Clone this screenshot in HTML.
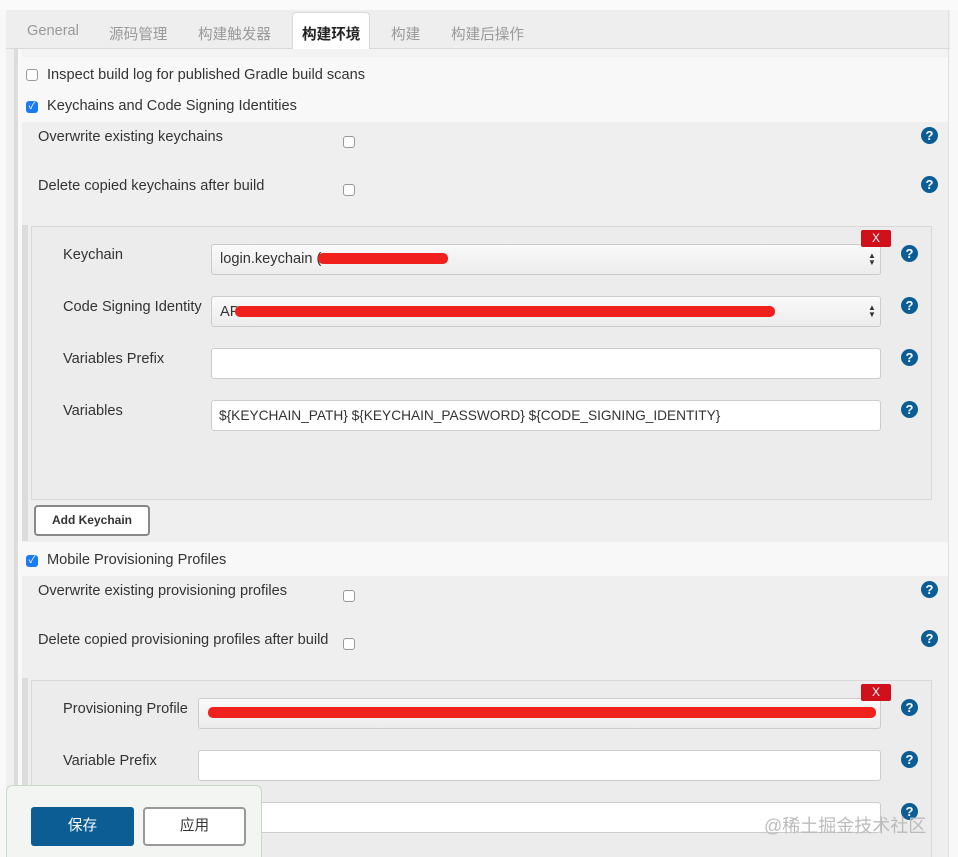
<!DOCTYPE html>
<html><head><meta charset="utf-8"><style>
*{margin:0;padding:0;box-sizing:border-box}
html,body{width:958px;height:857px;overflow:hidden}
body{background:#f8f8f8;font-family:"Liberation Sans","Noto Sans CJK SC",sans-serif;font-size:14.6px;color:#333;position:relative}
.a{position:absolute}
.t{position:absolute;white-space:nowrap}
.cb{position:absolute;width:12px;height:12px;border:1px solid #999;border-radius:3px;background:#fff}
.cbc{position:absolute;width:12px;height:12px;border-radius:3px;background:#1a7cf2;color:#fff;font-size:10px;line-height:12px;text-align:center}
.h{position:absolute;width:17px;height:17px;border-radius:50%;background:#0b5d95;color:#fff;font-weight:bold;font-size:13px;line-height:17px;text-align:center}
.in{position:absolute;background:#fff;border:1px solid #ccc;border-radius:3px;height:31px}
.sel{background:linear-gradient(#fafafa,#ececec)}
.red{position:absolute;height:11px;background:#f0201c;border-radius:5px}
.x{position:absolute;width:30px;height:17px;background:#d0101a;color:#fff;font-size:12px;text-align:center;line-height:17px;border-radius:2px}
.arr{position:absolute;font-size:8px;line-height:7px;color:#333}
</style></head><body>
<div class="a" style="left:0;top:0;width:958px;height:10px;background:#fafafa"></div>
<div class="a" style="left:6px;top:10px;width:944px;height:39px;background:#eeeeee;border-bottom:1px solid #d8d8d8"></div>
<div class="a" style="left:292px;top:12px;width:78px;height:37px;background:#fff;border:1px solid #d8d8d8;border-bottom:none;border-radius:4px 4px 0 0"></div>
<div class="t" style="left:27px;top:23px;color:#999">General</div>
<div class="t" style="left:109px;top:23px;color:#999">源码管理</div>
<div class="t" style="left:198px;top:23px;color:#999">构建触发器</div>
<div class="t" style="left:302px;top:23px;color:#222;font-weight:bold">构建环境</div>
<div class="t" style="left:391px;top:23px;color:#999">构建</div>
<div class="t" style="left:451px;top:23px;color:#999">构建后操作</div>
<div class="a" style="left:6px;top:49px;width:8px;height:808px;background:#f0f0f0"></div>
<div class="a" style="left:14px;top:49px;width:4px;height:808px;background:#dcdcdc"></div>
<div class="a" style="left:948px;top:10px;width:1px;height:847px;background:#e0e0e0"></div>
<div class="a" style="left:22px;top:49px;width:926px;height:8px;background:#f3f3f3"></div>
<div class="cb" style="left:26px;top:69px"></div>
<div class="t" style="left:47px;top:67px">Inspect build log for published Gradle build scans</div>
<div class="cbc" style="left:26px;top:101px">✓</div>
<div class="t" style="left:47px;top:98px">Keychains and Code Signing Identities</div>
<div class="a" style="left:22px;top:122px;width:926px;height:420px;background:#efefef"></div>
<div class="a" style="left:22px;top:225px;width:6px;height:316px;background:#dcdcdc"></div>
<div class="t" style="left:38px;top:129px">Overwrite existing keychains</div>
<div class="cb" style="left:343px;top:136px"></div>
<div class="h" style="left:921px;top:127px">?</div>
<div class="t" style="left:38px;top:178px">Delete copied keychains after build</div>
<div class="cb" style="left:343px;top:184px"></div>
<div class="h" style="left:921px;top:176px">?</div>
<div class="a" style="left:31px;top:226px;width:901px;height:274px;background:#ececec;border:1px solid #d8d8d8"></div>
<div class="t" style="left:63px;top:247px">Keychain</div>
<div class="in sel" style="left:211px;top:244px;width:670px"></div>
<div class="t" style="left:220px;top:251px">login.keychain (</div>
<div class="red" style="left:318px;top:253px;width:130px"></div>
<div class="arr" style="left:868px;top:252px">▲<br>▼</div>
<div class="x" style="left:861px;top:230px">X</div>
<div class="h" style="left:901px;top:245px">?</div>
<div class="t" style="left:63px;top:299px">Code Signing Identity</div>
<div class="in sel" style="left:211px;top:296px;width:670px"></div>
<div class="t" style="left:220px;top:304px">AP</div>
<div class="red" style="left:235px;top:306px;width:540px"></div>
<div class="arr" style="left:868px;top:304px">▲<br>▼</div>
<div class="h" style="left:901px;top:297px">?</div>
<div class="t" style="left:63px;top:351px">Variables Prefix</div>
<div class="in" style="left:211px;top:348px;width:670px"></div>
<div class="h" style="left:901px;top:349px">?</div>
<div class="t" style="left:63px;top:403px">Variables</div>
<div class="in" style="left:211px;top:400px;width:670px"></div>
<div class="t" style="left:219px;top:408px;font-size:13.7px">${KEYCHAIN_PATH} ${KEYCHAIN_PASSWORD} ${CODE_SIGNING_IDENTITY}</div>
<div class="h" style="left:901px;top:401px">?</div>
<div class="a" style="left:34px;top:505px;width:116px;height:31px;background:#fff;border:2px solid #888;border-radius:4px;font-weight:bold;font-size:12px;text-align:center;line-height:27px">Add Keychain</div>
<div class="cbc" style="left:26px;top:555px">✓</div>
<div class="t" style="left:47px;top:552px">Mobile Provisioning Profiles</div>
<div class="a" style="left:22px;top:576px;width:926px;height:281px;background:#efefef"></div>
<div class="t" style="left:38px;top:583px">Overwrite existing provisioning profiles</div>
<div class="cb" style="left:343px;top:590px"></div>
<div class="h" style="left:921px;top:581px">?</div>
<div class="t" style="left:38px;top:632px">Delete copied provisioning profiles after build</div>
<div class="cb" style="left:343px;top:638px"></div>
<div class="h" style="left:921px;top:630px">?</div>
<div class="a" style="left:22px;top:678px;width:6px;height:179px;background:#dcdcdc"></div>
<div class="a" style="left:31px;top:680px;width:901px;height:177px;background:#ececec;border:1px solid #d8d8d8;border-bottom:none"></div>
<div class="t" style="left:63px;top:701px">Provisioning Profile</div>
<div class="in sel" style="left:198px;top:698px;width:683px"></div>
<div class="red" style="left:208px;top:707px;width:668px"></div>
<div class="x" style="left:861px;top:684px">X</div>
<div class="h" style="left:901px;top:699px">?</div>
<div class="t" style="left:63px;top:753px">Variable Prefix</div>
<div class="in" style="left:198px;top:750px;width:683px"></div>
<div class="h" style="left:901px;top:751px">?</div>
<div class="in" style="left:198px;top:802px;width:683px"></div>
<div class="h" style="left:901px;top:803px">?</div>
<div class="a" style="left:6px;top:785px;width:256px;height:72px;background:#f2f5f1;border:1px solid #c5dcc5;border-bottom:none;border-radius:6px 6px 0 0"></div>
<div class="a" style="left:31px;top:807px;width:103px;height:39px;background:#0b5d94;border-radius:3px;color:#fff;text-align:center;line-height:39px">保存</div>
<div class="a" style="left:143px;top:807px;width:103px;height:39px;background:#fff;border:2px solid #999;border-radius:4px;text-align:center;line-height:35px">应用</div>
<div class="t" style="left:764px;top:812px;font-size:18px;color:#bbb">@稀土掘金技术社区</div>
</body></html>
